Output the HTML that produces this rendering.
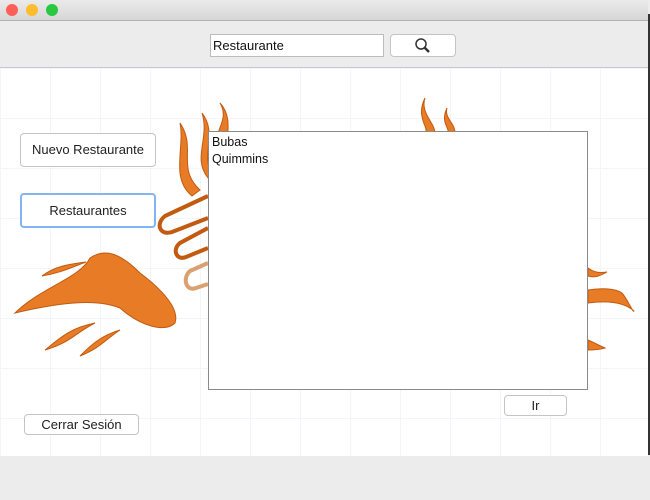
<!DOCTYPE html>
<html><head><style>
body{margin:0;width:650px;height:500px;overflow:hidden;background:#ececec;font-family:"Liberation Sans",sans-serif;position:relative}
.title{position:absolute;left:0;top:0;width:648px;height:20px;background:linear-gradient(#ebebeb,#d6d6d6);border-bottom:1px solid #b3b3b3}
.dot{position:absolute;top:4px;width:12px;height:12px;border-radius:50%}
.content{position:absolute;left:0;top:67px;width:648px;height:388px;background-color:#fff;border-top:1px solid #c8c8c8;
background-image:linear-gradient(#f2f5f9 1px,transparent 1px),linear-gradient(90deg,#f2f5f9 1px,transparent 1px);background-size:50px 50px}
.edge{position:absolute;left:648px;top:14px;width:2px;height:441px;background:#333}
.btn{position:absolute;background:#fff;border:1px solid #c4c4c4;border-radius:4px;font-size:13px;color:#222;text-align:center;box-sizing:border-box}
.list{position:absolute;left:208px;top:131px;width:380px;height:259px;background:#fff;border:1px solid #8a8a8a;box-sizing:border-box;font-size:12.5px;padding:2px 3px;line-height:17px;color:#111}
</style></head><body>
<div class="title">
<div class="dot" style="left:6px;background:#fc5f57"></div>
<div class="dot" style="left:26px;background:#fdbc2e"></div>
<div class="dot" style="left:46px;background:#28c840"></div>
</div>
<div style="position:absolute;left:210px;top:34px;width:174px;height:23px;background:#fff;border:1px solid #bcbcbc;box-sizing:border-box;font-size:13px;padding:3px 2px;color:#111">Restaurante</div>
<div class="btn" style="left:390px;top:34px;width:66px;height:23px">
<svg width="20" height="18" viewBox="0 0 20 18" style="margin-top:2px"><circle cx="8" cy="7" r="5" fill="none" stroke="#333" stroke-width="1.5"/><path d="M11.5 10.5 L16 15" stroke="#333" stroke-width="2.5"/></svg></div>
<div class="content">
<svg width="648" height="388" style="position:absolute;left:0;top:0">
<g fill="#e87b25" stroke="#c25a10" stroke-width="1">
<path d="M15 245 C40 220 80 210 90 190 C105 180 120 185 140 205 C160 220 180 240 175 255 C165 265 140 258 120 240 C100 232 70 232 15 245Z"/>
<path d="M42 208 C55 198 70 196 86 194 C70 200 60 205 42 208Z"/>
<path d="M45 282 C60 270 70 260 95 255 C75 265 70 275 45 282Z"/>
<path d="M80 288 C90 278 100 268 120 262 C105 272 100 280 80 288Z"/>
<path d="M192 128 C170 110 185 80 180 55 C197 80 176 100 200 122Z"/>
<path d="M208 110 C192 90 210 70 202 45 C218 65 200 88 212 105Z"/>
<path d="M220 35 C234 50 225 70 228 80 L216 80 C214 62 230 52 220 35Z"/>
<path d="M425 30 C415 50 430 60 425 65 L435 65 C435 55 420 45 425 30Z"/>
<path d="M447 40 C440 55 450 60 448 65 L455 65 C455 55 444 50 447 40Z"/>
<path d="M588 200 C595 205 600 205 607 204 C600 208 595 210 588 208Z"/>
<path d="M588 222 C600 220 615 220 622 225 C628 232 633 245 634 243 C625 235 610 232 588 235Z"/>
<path d="M588 272 C595 275 600 278 605 280 C598 282 592 282 588 282Z"/>
</g>
<g fill="none" stroke="#c25a10" stroke-width="4">
<path d="M208 128 L165 148 C155 156 160 168 172 164 L208 150"/>
<path d="M208 160 L180 175 C172 181 176 193 186 189 L208 180"/>
</g>
<path d="M208 195 L190 203 C182 210 186 224 196 220 L208 216" fill="none" stroke="#d9a070" stroke-width="4"/>
</svg>
</div>
<div class="edge"></div>
<div class="btn" style="left:20px;top:133px;width:136px;height:34px;line-height:32px">Nuevo Restaurante</div>
<div class="btn" style="left:20px;top:193px;width:136px;height:35px;line-height:31px;border:2px solid #80b5f2">Restaurantes</div>
<div class="list">Bubas<br>Quimmins</div>
<div class="btn" style="left:504px;top:395px;width:63px;height:21px;line-height:19px">Ir</div>
<div class="btn" style="left:24px;top:414px;width:115px;height:21px;line-height:19px">Cerrar Sesión</div>
</body></html>
